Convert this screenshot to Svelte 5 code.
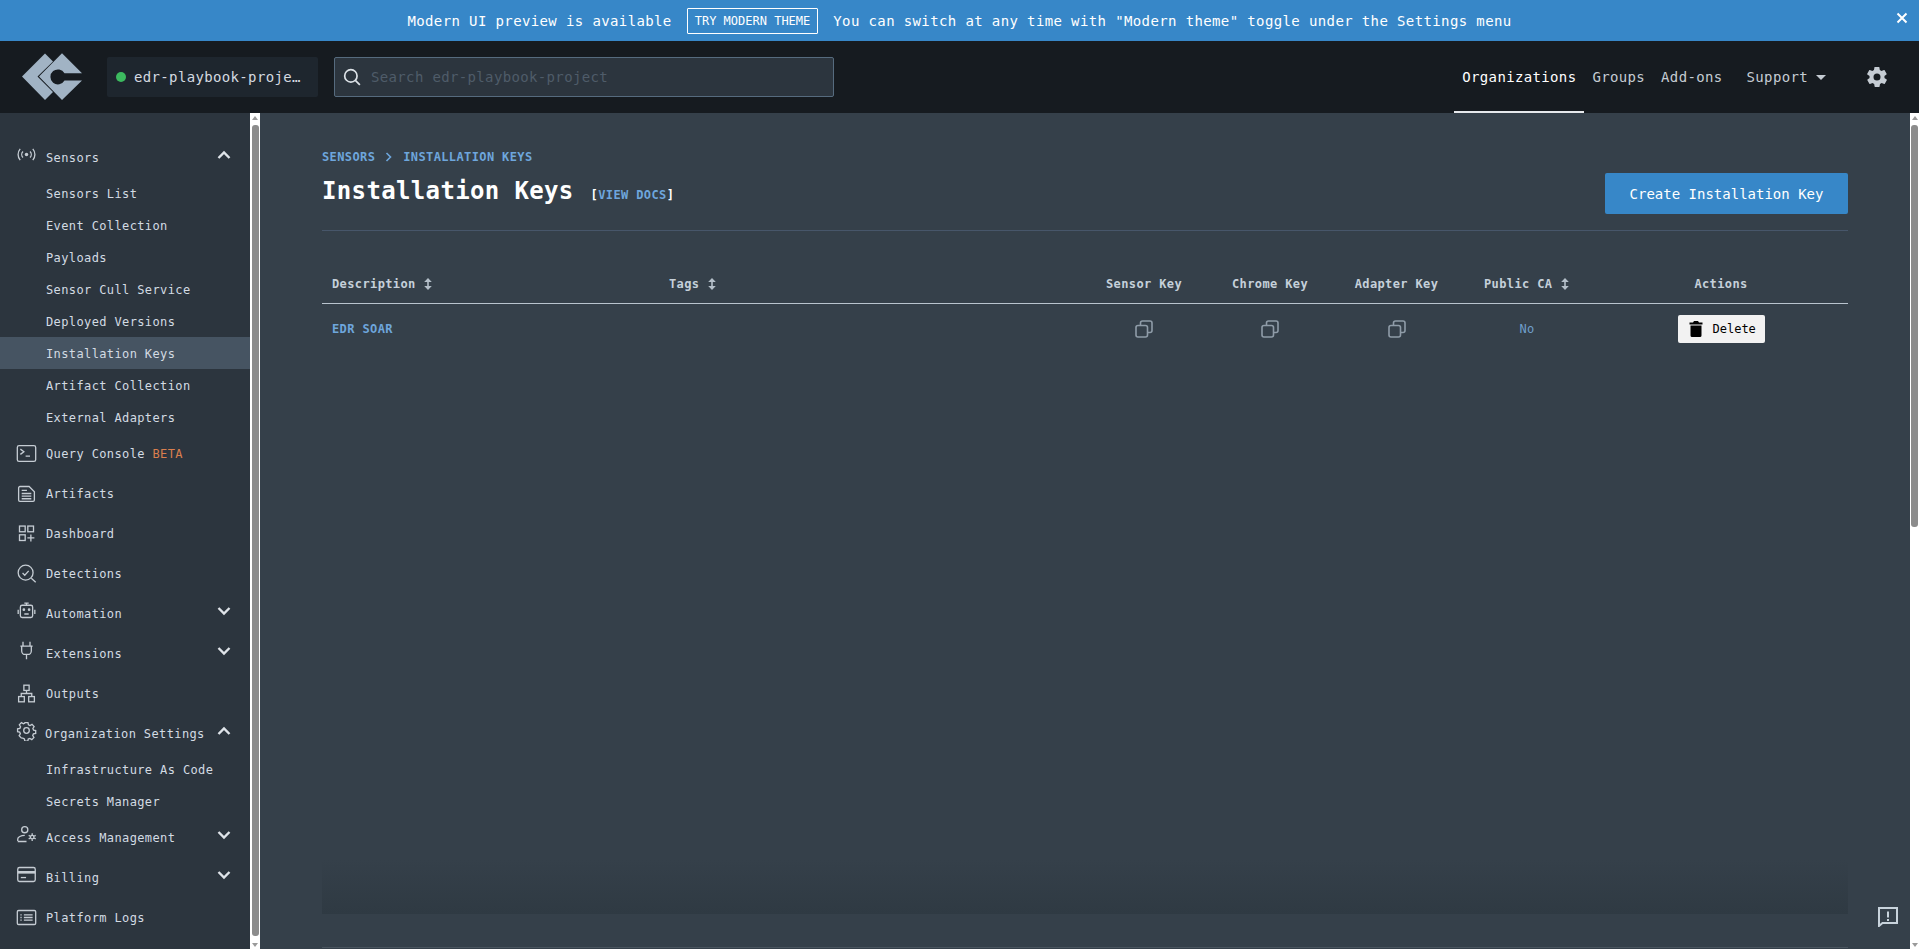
<script>
  const icons = {
    sensors:
      '<circle cx="12" cy="12" r="2" fill="currentColor" stroke="none"/><path d="M8 8.5a5 5 0 0 0 0 7M16 8.5a5 5 0 0 1 0 7M4.8 5.5a10 10 0 0 0 0 13M19.2 5.5a10 10 0 0 1 0 13"/>',
    query:
      '<rect x="1.5" y="3" width="21" height="18" rx="2"/><path d="M5 7l4 3-4 3M11 15h5"/>',
    artifacts:
      '<path d="M3 5.5A1.5 1.5 0 0 1 4.500 4H15l6 6v9.500A1.500 1.500 0 0 1 19.500 21h-15A1.500 1.500 0 0 1 3 19.500z"/><path d="M6.500 8.500h6M6.500 12h11M6.500 15h11M6.500 18h11"/>',
    dashboard:
      '<rect x="4" y="3.500" width="6.500" height="6.500"/><rect x="13.500" y="3.500" width="6.500" height="6.500"/><rect x="4" y="13.500" width="6.500" height="6.500"/><path d="M17 13v8M13 17h8"/>',
    detections:
      '<circle cx="11" cy="11" r="8.500"/><path d="M7.500 11.500l2.500 2.500 4.500-5M17.500 17.500l5 4.500"/>',
    automation:
      '<rect x="5" y="6" width="14" height="14" rx="2"/><path d="M12 6V3.500M9.500 3.500h5M2.500 11v5M21.500 11v5M9.500 16h5"/><circle cx="9" cy="11" r=".8"/><circle cx="15" cy="11" r=".8"/>',
    extensions:
      '<path d="M8 2v5M16 2v5M5 7h14M6.500 7v5.500a4 4 0 0 0 4 4h3a4 4 0 0 0 4-4V7M12 16.500V22"/>',
    outputs:
      '<rect x="9" y="2.500" width="6" height="6"/><rect x="3" y="15.500" width="6.500" height="6"/><rect x="14.500" y="15.500" width="6.500" height="6"/><path d="M12 8.500V12M6 15.500V12h12v3.500"/>',
    org:
      '<circle cx="12" cy="12" r="3.200"/><path d="M10.300 3h3.400l.5 2.600 1.800.8 2.300-1.400 2.400 2.400-1.400 2.300.8 1.800 2.400.5v3.400l-2.600.5-.8 1.800 1.400 2.300-2.400 2.400-2.300-1.400-1.800.8-.5 2.400h-3.400l-.5-2.600-1.800-.8L6 20.400 3.600 18 5 15.700l-.8-1.800L1.800 13.400V10l2.600-.5.8-1.800L3.800 5.400 6.200 3l2.300 1.400 1.300-.8z"/>',
    access:
      '<circle cx="10" cy="6.500" r="3.500"/><path d="M2 19.500v-2.500c0-2 3.500-4 8-4M2 20h10"/><circle cx="18.500" cy="15" r="2"/><path d="M18.500 10.500v2M18.500 17.500v2M14.500 13l1.800 1M20.700 16l1.800 1M14.500 17l1.800-1M20.700 14l1.800-1"/>',
    billing:
      '<rect x="2" y="4" width="20" height="16" rx="2"/><path d="M2 9.500h20" stroke-width="3"/><path d="M5.500 15.500h6"/>',
    logs:
      '<rect x="1.500" y="4" width="21" height="16" rx="1.500"/><path d="M9 9h10M9 12h10M9 15h10"/><path d="M5 9h1.500M5 12h1.500M5 15h1.500"/>'
  };

  const nav = [
    {
      label: "Sensors",
      icon: "sensors",
      open: true,
      items: [
        "Sensors List",
        "Event Collection",
        "Payloads",
        "Sensor Cull Service",
        "Deployed Versions",
        "Installation Keys",
        "Artifact Collection",
        "External Adapters"
      ]
    },
    { label: "Query Console", icon: "query", beta: true },
    { label: "Artifacts", icon: "artifacts" },
    { label: "Dashboard", icon: "dashboard" },
    { label: "Detections", icon: "detections" },
    { label: "Automation", icon: "automation", closed: true },
    { label: "Extensions", icon: "extensions", closed: true },
    { label: "Outputs", icon: "outputs" },
    {
      label: "Organization Settings",
      icon: "org",
      open: true,
      items: ["Infrastructure As Code", "Secrets Manager"]
    },
    { label: "Access Management", icon: "access", closed: true },
    { label: "Billing", icon: "billing", closed: true },
    { label: "Platform Logs", icon: "logs" }
  ];

  const keyCols = ["Sensor Key", "Chrome Key", "Adapter Key"];
</script>

{#snippet sortIcon()}
  <svg class="sort" viewBox="0 0 10 14" width="10" height="14">
    <path d="M5 1L1.200 5h3v4h-3L5 13l3.800-4h-3V5h3z" fill="currentColor" />
  </svg>
{/snippet}

{#snippet copyIcon()}
  <svg class="copy" viewBox="0 0 18 18" width="18" height="18">
    <rect x="1" y="5.500" width="11.500" height="11.500" rx="2" />
    <path d="M5.500 5.500V3a2 2 0 0 1 2-2H15a2 2 0 0 1 2 2v7.500a2 2 0 0 1-2 2h-2.500" />
  </svg>
{/snippet}

{#snippet chevron(up)}
  <svg class="chev" viewBox="0 0 14 10" width="14" height="10">
    <path d={up ? "M1.500 8L7 2.500 12.500 8" : "M1.500 2L7 7.500 12.500 2"} />
  </svg>
{/snippet}

{#snippet scrollbar(cls)}
  <div class="scrollbar {cls}">
    <span class="arrow up"></span>
    <span class="thumb"></span>
    <span class="arrow down"></span>
  </div>
{/snippet}

<div class="page">
  <div class="banner">
    <span>Modern UI preview is available</span>
    <button class="try">TRY MODERN THEME</button>
    <span>You can switch at any time with "Modern theme" toggle under the Settings menu</span>
    <svg class="close" viewBox="0 0 12 12" width="12" height="12"><path d="M1.500 1.500l9 9M10.500 1.500l-9 9" /></svg>
  </div>

  <header>
    <svg class="logo" viewBox="0 0 60 48" width="60" height="48">
      <path d="M0 23.500L23 .5l8 8L15.500 23.500 31 39l-8 8z" fill="#a1b3c4" />
      <path
        fill="#a1b3c4"
        fill-rule="evenodd"
        d="M17 23.500L40 .3l20 20H42.500a7.500 7.500 0 1 0 0 7.200H60L40 47z"
      />
    </svg>
    <div class="project">
      <span class="dot"></span>
      <span class="project-name">edr-playbook-project</span>
    </div>
    <div class="search">
      <svg viewBox="0 0 16 16" width="18" height="18"><circle cx="7" cy="7" r="5.500" /><path d="M11 11l4 4" /></svg>
      <span>Search edr-playbook-project</span>
    </div>
    <nav class="topnav">
      <a class="active" href="#orgs">Organizations</a>
      <a href="#groups">Groups</a>
      <a href="#addons">Add-ons</a>
      <a class="support" href="#support">Support<span class="caret"></span></a>
      <svg class="gear" viewBox="0 0 24 24" width="24" height="24">
        <path
          fill="#c5ccd3"
          d="M19.400 13c.1-.3.100-.7.100-1s0-.7-.1-1l2.100-1.600c.2-.2.200-.4.100-.6l-2-3.500c-.1-.2-.4-.3-.6-.2l-2.500 1c-.5-.4-1.100-.7-1.700-1l-.4-2.600c0-.3-.2-.4-.5-.4h-4c-.3 0-.5.100-.5.400l-.4 2.600c-.6.300-1.200.6-1.700 1l-2.500-1c-.2-.1-.5 0-.6.200l-2 3.500c-.1.200-.1.400.1.600L4.600 11c-.1.300-.1.700-.1 1s0 .7.100 1l-2.100 1.600c-.2.200-.2.400-.1.600l2 3.500c.1.200.4.300.6.200l2.500-1c.5.400 1.100.7 1.700 1l.4 2.600c0 .3.200.4.500.4h4c.3 0 .5-.1.500-.4l.4-2.600c.6-.3 1.200-.6 1.700-1l2.500 1c.2.100.5 0 .6-.2l2-3.500c.1-.2.100-.4-.1-.6zM12 15.500a3.500 3.500 0 1 1 0-7 3.500 3.500 0 0 1 0 7z"
        />
      </svg>
    </nav>
  </header>

  <div class="body">
    <aside>
      {#each nav as entry}
        <div class="row" class:raised={entry.open || entry.closed}>
          <svg class="icon" class:wide={entry.icon === "org"} viewBox="0 0 24 24" width="21" height="21">{@html icons[entry.icon]}</svg>
          <span class="label">
            {entry.label}{#if entry.beta}&nbsp;<span class="beta">BETA</span>{/if}
          </span>
          {#if entry.open}{@render chevron(true)}{/if}
          {#if entry.closed}{@render chevron(false)}{/if}
        </div>
        {#if entry.items}
          {#each entry.items as item}
            <div class="sub" class:current={item === "Installation Keys"}>{item}</div>
          {/each}
        {/if}
      {/each}
    </aside>
    {@render scrollbar("left")}

    <main>
      <div class="crumbs">
        <span>SENSORS</span>
        <svg viewBox="0 0 8 10" width="8" height="10"><path d="M1.500 1l4 4-4 4" /></svg>
        <span>INSTALLATION KEYS</span>
      </div>
      <div class="title-row">
        <div class="title-text">
          <h1>Installation Keys</h1>
          <span class="docs"><b>[</b>VIEW DOCS<b>]</b></span>
        </div>
        <button class="create">Create Installation Key</button>
      </div>

      <div class="panel">
        <table>
          <colgroup>
            <col style="width:337px" />
            <col style="width:422px" />
            <col style="width:126px" />
            <col style="width:126px" />
            <col style="width:127px" />
            <col style="width:134px" />
            <col style="width:254px" />
          </colgroup>
          <thead>
            <tr>
              <th class="left">Description {@render sortIcon()}</th>
              <th class="left">Tags {@render sortIcon()}</th>
              {#each keyCols as col}
                <th>{col}</th>
              {/each}
              <th>Public CA {@render sortIcon()}</th>
              <th>Actions</th>
            </tr>
          </thead>
          <tbody>
            <tr>
              <td class="left name">EDR SOAR</td>
              <td></td>
              {#each keyCols as col}
                <td>{@render copyIcon()}</td>
              {/each}
              <td class="no">No</td>
              <td>
                <button class="delete">
                  <svg viewBox="0 0 14 16" width="14" height="16">
                    <path fill="#000" d="M5 0h4l1 1.500h3.500V3.500H.5V1.500H4zM1.500 4.500h11V14.500A1.500 1.500 0 0 1 11 16H3a1.500 1.500 0 0 1-1.500-1.500z" />
                  </svg>
                  Delete
                </button>
              </td>
            </tr>
          </tbody>
        </table>
      </div>
      <div class="foot-line"></div>

      <div class="feedback">
        <svg viewBox="0 0 20 20" width="20" height="20">
          <path d="M1 1h18v15H4.500L1 19z" />
          <path class="mark" d="M10 4.500v6M10 12v2" />
        </svg>
      </div>
    </main>
    {@render scrollbar("right")}
  </div>
</div>

<style>
  :global(body) {
    margin: 0;
    overflow: hidden;
    background: #35404a;
  }

  .page {
    display: flex;
    flex-direction: column;
    height: 949px;
    font-family: "DejaVu Sans Mono", "Liberation Mono", monospace;
    font-size: 14px;
    letter-spacing: 0.35px;
    color: #fff;
  }

  button {
    font-family: inherit;
    letter-spacing: inherit;
    cursor: pointer;
  }

  .banner {
    position: relative;
    flex: none;
    height: 41px;
    display: flex;
    align-items: center;
    justify-content: center;
    gap: 15px;
    box-sizing: border-box;
    letter-spacing: 0.38px;
    background: #3787c8;
  }

  .try {
    height: 26px;
    padding: 0 7px;
    background: transparent;
    border: 1px solid #fff;
    border-radius: 1px;
    color: #fff;
    font-size: 12px;
    letter-spacing: 0;
  }

  .close {
    position: absolute;
    right: 11px;
    top: 12px;
    fill: none;
    stroke: #fff;
    stroke-width: 2;
  }

  header {
    flex: none;
    height: 72px;
    display: flex;
    align-items: center;
    box-sizing: border-box;
    padding-left: 22px;
    background: #161b20;
  }

  .logo {
    flex: none;
    margin-right: 25px;
  }

  .project {
    flex: none;
    width: 211px;
    height: 40px;
    box-sizing: border-box;
    display: flex;
    align-items: center;
    gap: 8px;
    padding: 0 12px 0 9px;
    border-radius: 2px;
    background: #1e262e;
    color: #d4dae0;
  }

  .dot {
    flex: none;
    width: 10px;
    height: 10px;
    border-radius: 50%;
    background: #3cba5f;
  }

  .project-name {
    overflow: hidden;
    white-space: nowrap;
    text-overflow: ellipsis;
  }

  .search {
    flex: none;
    width: 500px;
    height: 40px;
    margin-left: 16px;
    box-sizing: border-box;
    display: flex;
    align-items: center;
    gap: 10px;
    padding-left: 8px;
    border: 1px solid #566b7e;
    border-radius: 2px;
    background: #2c353e;
    color: #4f5c69;
  }

  .search svg {
    fill: none;
    stroke: #dde3e8;
    stroke-width: 1.5;
  }

  .topnav {
    flex: 1;
    height: 100%;
    display: flex;
    align-items: center;
    justify-content: flex-end;
    padding-right: 30px;
  }

  .topnav a {
    height: 100%;
    box-sizing: border-box;
    display: flex;
    align-items: center;
    padding: 0 8px;
    color: #c5ccd3;
    text-decoration: none;
  }

  .topnav a.active {
    color: #fff;
    border-bottom: 2px solid #e6e9ec;
    padding: 2px 8px 0;
  }

  .topnav a.support {
    margin-left: 8px;
    gap: 8px;
  }

  .caret {
    width: 0;
    height: 0;
    border: 5px solid transparent;
    border-top-color: #c5ccd3;
    border-bottom-width: 0;
  }

  .gear {
    margin-left: 31px;
  }

  .body {
    flex: 1;
    min-height: 0;
    display: flex;
  }

  aside {
    flex: none;
    width: 250px;
    box-sizing: border-box;
    padding-top: 24px;
    background: #2c353e;
    color: #d3dbe3;
    font-size: 12px;
    letter-spacing: 0.38px;
  }

  .row {
    height: 40px;
    display: flex;
    align-items: center;
    padding: 0 19px 0 16px;
  }

  .icon {
    flex: none;
    margin-right: 9px;
    fill: none;
    stroke: #c5ccd3;
    color: #c5ccd3;
    stroke-width: 1.5;
  }

  .icon.wide {
    margin-right: 8px;
  }

  .label {
    flex: 1;
    white-space: nowrap;
    padding-top: 2px;
  }

  .row.raised .icon {
    margin-bottom: 5px;
  }

  .chev {
    flex: none;
    margin-bottom: 5px;
    fill: none;
    stroke: #dfe4e9;
    stroke-width: 2.4;
  }

  .beta {
    color: #d97f4e;
  }

  .sub {
    height: 32px;
    box-sizing: border-box;
    display: flex;
    align-items: center;
    padding: 2px 0 0 46px;
    white-space: nowrap;
  }

  .sub.current {
    background: #465462;
  }

  .scrollbar {
    flex: none;
    width: 10px;
    box-sizing: border-box;
    display: flex;
    flex-direction: column;
    align-items: center;
    background: #fff;
  }

  .scrollbar.right {
    width: 9px;
  }

  .arrow {
    flex: none;
    width: 0;
    height: 0;
    border: 3.500px solid transparent;
  }

  .arrow.up {
    margin-top: 3px;
    border-bottom: 4px solid #9a9a9a;
    border-top-width: 0;
  }

  .arrow.down {
    margin: auto 0 2px;
    border-top: 4px solid #9a9a9a;
    border-bottom-width: 0;
  }

  .thumb {
    flex: none;
    width: 7px;
    margin-top: 5px;
    border-radius: 3px;
    background: #8c8c8c;
  }

  .scrollbar.left .thumb {
    height: 811px;
  }

  .scrollbar.right .thumb {
    height: 402px;
  }

  main {
    position: relative;
    flex: 1;
    min-width: 0;
    box-sizing: border-box;
    display: flex;
    flex-direction: column;
    padding: 36px 62px 0;
    background: #35404a;
  }

  .crumbs {
    display: flex;
    align-items: center;
    gap: 8px;
    height: 16px;
    color: #6ea6dc;
    font-size: 12px;
    letter-spacing: 0.38px;
    font-weight: bold;
  }

  .crumbs svg {
    margin: 0 2px;
    fill: none;
    stroke: #6ea6dc;
    stroke-width: 1.600;
  }

  .title-row {
    flex: none;
    height: 57px;
    margin-top: 8px;
    display: flex;
    justify-content: space-between;
    align-items: flex-start;
    border-bottom: 1px solid #47566a;
  }

  .title-text {
    display: flex;
    align-items: baseline;
    gap: 17px;
  }

  h1 {
    margin: 3px 0 0;
    font-size: 24px;
    line-height: 30px;
    letter-spacing: 0.35px;
    color: #fff;
  }

  .docs {
    color: #6ea6dc;
    font-size: 12px;
    letter-spacing: 0.38px;
    font-weight: bold;
  }

  .docs b {
    color: #fff;
  }

  .create {
    width: 243px;
    height: 41px;
    background: #3787c8;
    border: 0;
    border-radius: 2px;
    color: #fff;
    font-size: 14px;
    letter-spacing: 0;
  }

  .panel {
    flex: none;
    height: 683px;
    background: linear-gradient(to bottom, #35404a 0, #35404a 92%, #2f3a43 100%);
  }

  table {
    width: 100%;
    margin-top: 35px;
    table-layout: fixed;
    border-collapse: collapse;
    font-size: 12px;
    letter-spacing: 0.38px;
  }

  th {
    height: 37px;
    box-sizing: border-box;
    padding: 0;
    font-weight: bold;
    color: #c5d0da;
    text-align: center;
    border-bottom: 1px solid #b9c4ce;
  }

  th.left,
  td.left {
    text-align: left;
    padding-left: 10px;
  }

  .sort {
    margin-left: 0;
    vertical-align: -3px;
    color: #b4bfc9;
  }

  td {
    height: 50px;
    padding: 0;
    text-align: center;
  }

  td.name {
    color: #6ea6dc;
    font-weight: bold;
  }

  td.no {
    color: #6f9fca;
  }

  .copy {
    vertical-align: middle;
    fill: none;
    stroke: #8f9ca8;
    stroke-width: 1.600;
  }

  .delete {
    display: inline-flex;
    align-items: center;
    gap: 10px;
    width: 87px;
    height: 28px;
    padding: 0 0 0 11px;
    box-sizing: border-box;
    background: #f2f2f2;
    border: 0;
    border-radius: 2px;
    color: #000;
    font-size: 12px;
    letter-spacing: 0;
  }

  .foot-line {
    margin-top: 33px;
    border-top: 1px solid #4a555f;
  }

  .feedback {
    position: absolute;
    right: 12px;
    bottom: 22px;
    width: 20px;
    height: 20px;
  }

  .feedback svg {
    fill: none;
    stroke: #c8d3dc;
    stroke-width: 2;
  }
</style>
